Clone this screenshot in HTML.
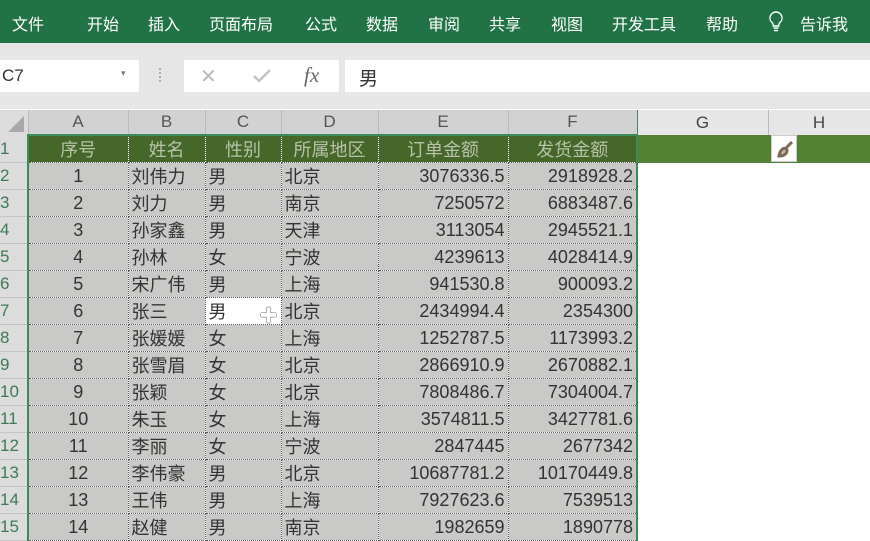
<!DOCTYPE html>
<html><head><meta charset="utf-8"><style>
*{margin:0;padding:0;box-sizing:border-box}
body{width:870px;height:529px;overflow:hidden;background:#fff;font-family:"Liberation Sans","Noto Sans CJK SC",sans-serif;position:relative}
.rib{position:absolute;left:0;top:0;width:870px;height:43px;background:#217346;color:#fff;font-size:16px}
.rib span{position:absolute;top:11px}
.fb{position:absolute;left:0;top:43px;width:870px;height:66px;background:#e6e6e6}
.box{position:absolute;background:#fff;top:17px;height:32px}
table{position:absolute;left:0;top:110px;border-collapse:collapse;table-layout:fixed;width:870px}
td{height:27px;padding:0 3px;font-size:18px;color:#333;white-space:nowrap;overflow:hidden;border-right:1px dotted #555;border-bottom:1px dotted #555;background:#c9c9c7}
tr.ch td{height:25px;background:#d2d2d2;color:#555;text-align:center;border:none;border-right:1px solid #bbb;font-size:17px}
td.rh{background:#dcdcdc;color:#3d7a55;text-align:left;padding:0;border:none;border-bottom:1px solid #c4c4c4;font-size:17px}
tr.h td.d{background:#45672a;color:#b8c2a8;text-align:center}
td.e{background:#fff;border:none}
tr.h td.e{background:#548235}
tr.ch td.e{background:#e6e6e6;color:#444}
.c{text-align:center}.r{text-align:right}
</style></head><body>
<div class="rib">
<span style="left:12px">文件</span><span style="left:87px">开始</span><span style="left:148px">插入</span><span style="left:209px">页面布局</span><span style="left:305px">公式</span><span style="left:366px">数据</span><span style="left:428px">审阅</span><span style="left:489px">共享</span><span style="left:551px">视图</span><span style="left:612px">开发工具</span><span style="left:706px">帮助</span>
<svg style="position:absolute;left:768px;top:11px" width="16" height="22" viewBox="0 0 16 22"><path d="M8 1a6 6 0 0 0-4 10.5c1 1 1.3 2 1.3 3.5h5.4c0-1.5.3-2.5 1.3-3.5A6 6 0 0 0 8 1zM5.5 17h5M6 19.5h4" fill="none" stroke="#fff" stroke-width="1.4"/></svg>
<span style="left:800px">告诉我</span></div>
<div class="fb">
<div class="box" style="left:0;width:139px"><span style="position:absolute;left:2px;top:6px;font-size:17px;color:#333">C7</span><span style="position:absolute;left:121px;top:8px;font-size:9px;color:#777">▾</span></div>
<div style="position:absolute;left:159px;top:25px;width:2px;height:14px;border-left:2px dotted #aaa"></div>
<div class="box" style="left:184px;width:155px">
<span style="position:absolute;left:16px;top:4px;font-size:20px;color:#bbb">✕</span>
<svg style="position:absolute;left:68px;top:8px" width="20" height="16"><path d="M2 8l5 5 11-11" fill="none" stroke="#c4c4c4" stroke-width="2.5"/></svg>
<span style="position:absolute;left:120px;top:3px;font-size:21px;color:#666;font-family:'Liberation Serif',serif;font-style:italic">fx</span></div>
<div class="box" style="left:345px;width:525px"><span style="position:absolute;left:14px;top:4px;font-size:19px;color:#333">男</span></div>
</div>
<table>
<colgroup><col style="width:28px"><col style="width:100px"><col style="width:77px"><col style="width:76px"><col style="width:97px"><col style="width:130px"><col style="width:129px"><col style="width:131px"><col style="width:102px"></colgroup>
<tr class="ch"><td style="background:#dcdcdc;padding:0"><svg width="26" height="22" style="display:block"><path d="M24 4V20H8z" fill="#a9a9a9"/></svg></td><td>A</td><td>B</td><td>C</td><td>D</td><td>E</td><td style="border-right:1px solid #3d8a5a">F</td><td class="e">G</td><td class="e">H</td></tr>
<tr class="h"><td class="rh">1</td><td class="d" style="border-left:2px solid #3d8a5a;border-top:2px solid #3d8a5a">序号</td><td class="d" style="border-top:2px solid #3d8a5a">姓名</td><td class="d" style="border-top:2px solid #3d8a5a">性别</td><td class="d" style="border-top:2px solid #3d8a5a">所属地区</td><td class="d" style="border-top:2px solid #3d8a5a">订单金额</td><td class="d" style="border-top:2px solid #3d8a5a;border-right:2px solid #3d8a5a">发货金额</td><td class="e"></td><td class="e"><div style="width:26px;height:27px;background:#fff;border:1px solid #ccc;margin-left:0;padding:4px"><svg width="18" height="18"><path d="M11 7l5-5M3 16c1-5 3-8 7-8l1 2c0 4-3 6-8 6z" stroke="#7a6a55" stroke-width="3" fill="#c7c29a"/></svg></div></td></tr>
<tr><td class="rh">2</td><td class="c" style="border-left:2px solid #3d8a5a">1</td><td>刘伟力</td><td>男</td><td>北京</td><td class="r">3076336.5</td><td class="r" style="border-right:2px solid #3d8a5a">2918928.2</td><td class="e"></td><td class="e"></td></tr>
<tr><td class="rh">3</td><td class="c" style="border-left:2px solid #3d8a5a">2</td><td>刘力</td><td>男</td><td>南京</td><td class="r">7250572</td><td class="r" style="border-right:2px solid #3d8a5a">6883487.6</td><td class="e"></td><td class="e"></td></tr>
<tr><td class="rh">4</td><td class="c" style="border-left:2px solid #3d8a5a">3</td><td>孙家鑫</td><td>男</td><td>天津</td><td class="r">3113054</td><td class="r" style="border-right:2px solid #3d8a5a">2945521.1</td><td class="e"></td><td class="e"></td></tr>
<tr><td class="rh">5</td><td class="c" style="border-left:2px solid #3d8a5a">4</td><td>孙林</td><td>女</td><td>宁波</td><td class="r">4239613</td><td class="r" style="border-right:2px solid #3d8a5a">4028414.9</td><td class="e"></td><td class="e"></td></tr>
<tr><td class="rh">6</td><td class="c" style="border-left:2px solid #3d8a5a">5</td><td>宋广伟</td><td>男</td><td>上海</td><td class="r">941530.8</td><td class="r" style="border-right:2px solid #3d8a5a">900093.2</td><td class="e"></td><td class="e"></td></tr>
<tr><td class="rh">7</td><td class="c" style="border-left:2px solid #3d8a5a">6</td><td>张三</td><td style="background:#fff;position:relative">男<span style="position:absolute;left:54px;top:4px;font-size:18px;color:#fff;text-shadow:0 0 1px #000,0 0 1px #000">✚</span></td><td>北京</td><td class="r">2434994.4</td><td class="r" style="border-right:2px solid #3d8a5a">2354300</td><td class="e"></td><td class="e"></td></tr>
<tr><td class="rh">8</td><td class="c" style="border-left:2px solid #3d8a5a">7</td><td>张媛媛</td><td>女</td><td>上海</td><td class="r">1252787.5</td><td class="r" style="border-right:2px solid #3d8a5a">1173993.2</td><td class="e"></td><td class="e"></td></tr>
<tr><td class="rh">9</td><td class="c" style="border-left:2px solid #3d8a5a">8</td><td>张雪眉</td><td>女</td><td>北京</td><td class="r">2866910.9</td><td class="r" style="border-right:2px solid #3d8a5a">2670882.1</td><td class="e"></td><td class="e"></td></tr>
<tr><td class="rh">10</td><td class="c" style="border-left:2px solid #3d8a5a">9</td><td>张颖</td><td>女</td><td>北京</td><td class="r">7808486.7</td><td class="r" style="border-right:2px solid #3d8a5a">7304004.7</td><td class="e"></td><td class="e"></td></tr>
<tr><td class="rh">11</td><td class="c" style="border-left:2px solid #3d8a5a">10</td><td>朱玉</td><td>女</td><td>上海</td><td class="r">3574811.5</td><td class="r" style="border-right:2px solid #3d8a5a">3427781.6</td><td class="e"></td><td class="e"></td></tr>
<tr><td class="rh">12</td><td class="c" style="border-left:2px solid #3d8a5a">11</td><td>李丽</td><td>女</td><td>宁波</td><td class="r">2847445</td><td class="r" style="border-right:2px solid #3d8a5a">2677342</td><td class="e"></td><td class="e"></td></tr>
<tr><td class="rh">13</td><td class="c" style="border-left:2px solid #3d8a5a">12</td><td>李伟豪</td><td>男</td><td>北京</td><td class="r">10687781.2</td><td class="r" style="border-right:2px solid #3d8a5a">10170449.8</td><td class="e"></td><td class="e"></td></tr>
<tr><td class="rh">14</td><td class="c" style="border-left:2px solid #3d8a5a">13</td><td>王伟</td><td>男</td><td>上海</td><td class="r">7927623.6</td><td class="r" style="border-right:2px solid #3d8a5a">7539513</td><td class="e"></td><td class="e"></td></tr>
<tr><td class="rh">15</td><td class="c" style="border-left:2px solid #3d8a5a">14</td><td>赵健</td><td>男</td><td>南京</td><td class="r">1982659</td><td class="r" style="border-right:2px solid #3d8a5a">1890778</td><td class="e"></td><td class="e"></td></tr>
</table>
</body></html>
